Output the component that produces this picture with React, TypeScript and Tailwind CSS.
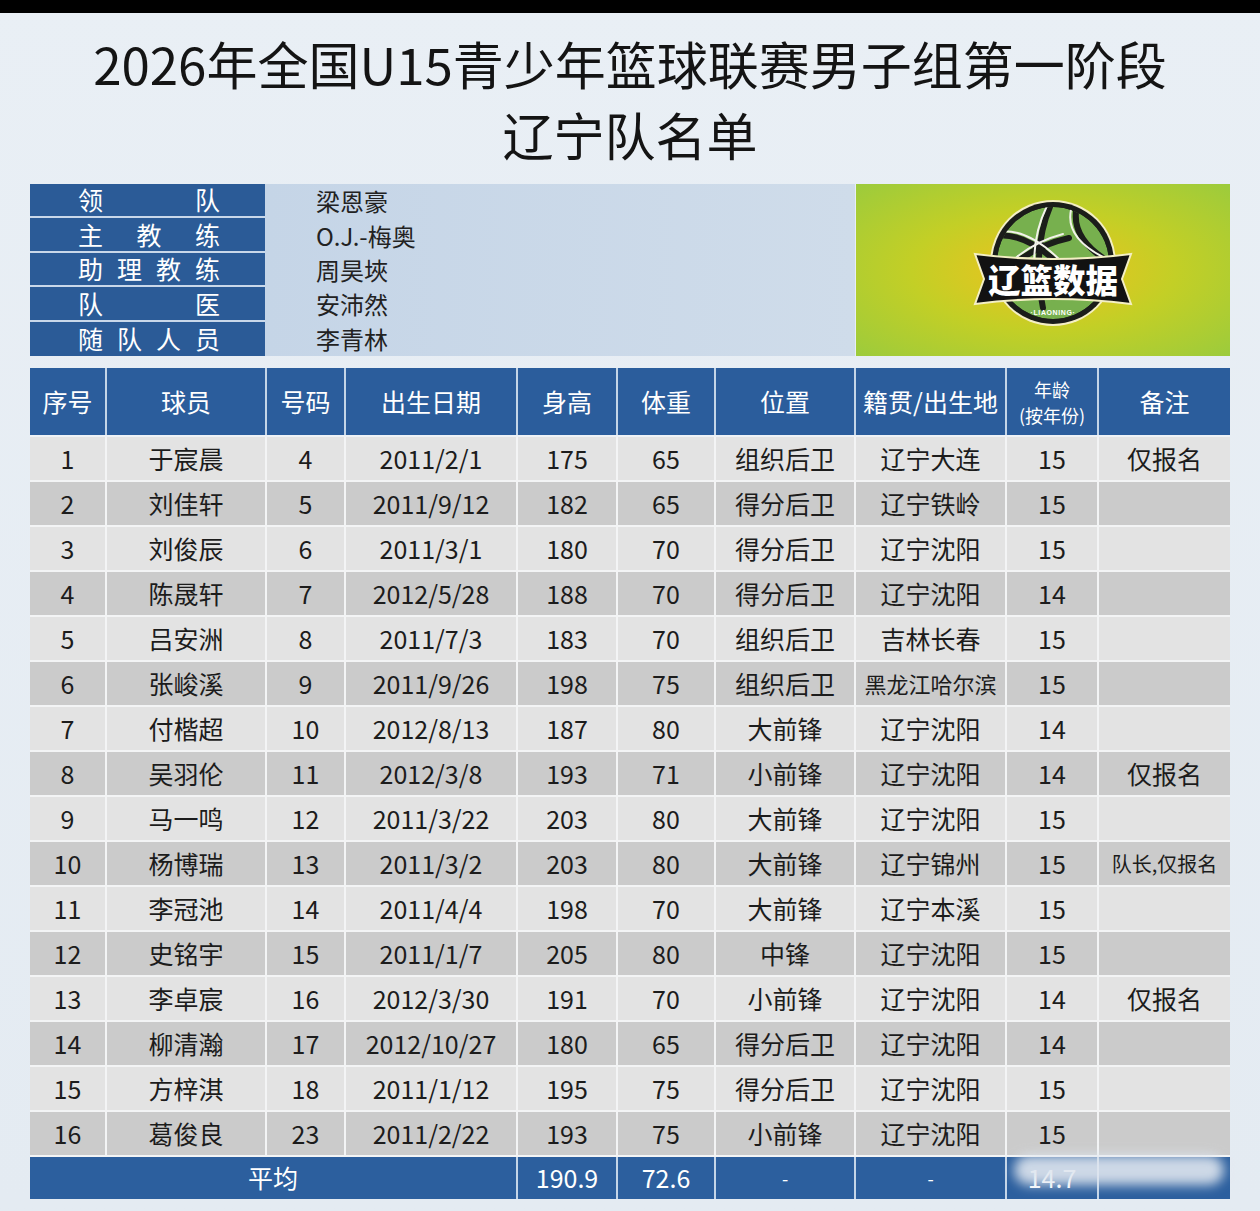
const staff = [
  { label: ["领", "队"], name: "梁恩豪" },
  { label: ["主", "教", "练"], name: "O.J.-梅奥" },
  { label: ["助", "理", "教", "练"], name: "周昊埉" },
  { label: ["队", "医"], name: "安沛然" },
  { label: ["随", "队", "人", "员"], name: "李青林" },
];

type Row = [number, string, number, string, number, number, string, string, number, string];

const players: Row[] = [
  [1, "于宸晨", 4, "2011/2/1", 175, 65, "组织后卫", "辽宁大连", 15, "仅报名"],
  [2, "刘佳轩", 5, "2011/9/12", 182, 65, "得分后卫", "辽宁铁岭", 15, ""],
  [3, "刘俊辰", 6, "2011/3/1", 180, 70, "得分后卫", "辽宁沈阳", 15, ""],
  [4, "陈晟轩", 7, "2012/5/28", 188, 70, "得分后卫", "辽宁沈阳", 14, ""],
  [5, "吕安洲", 8, "2011/7/3", 183, 70, "组织后卫", "吉林长春", 15, ""],
  [6, "张峻溪", 9, "2011/9/26", 198, 75, "组织后卫", "黑龙江哈尔滨", 15, ""],
  [7, "付楷超", 10, "2012/8/13", 187, 80, "大前锋", "辽宁沈阳", 14, ""],
  [8, "吴羽伦", 11, "2012/3/8", 193, 71, "小前锋", "辽宁沈阳", 14, "仅报名"],
  [9, "马一鸣", 12, "2011/3/22", 203, 80, "大前锋", "辽宁沈阳", 15, ""],
  [10, "杨博瑞", 13, "2011/3/2", 203, 80, "大前锋", "辽宁锦州", 15, "队长,仅报名"],
  [11, "李冠池", 14, "2011/4/4", 198, 70, "大前锋", "辽宁本溪", 15, ""],
  [12, "史铭宇", 15, "2011/1/7", 205, 80, "中锋", "辽宁沈阳", 15, ""],
  [13, "李卓宸", 16, "2012/3/30", 191, 70, "小前锋", "辽宁沈阳", 14, "仅报名"],
  [14, "柳清瀚", 17, "2012/10/27", 180, 65, "得分后卫", "辽宁沈阳", 14, ""],
  [15, "方梓淇", 18, "2011/1/12", 195, 75, "得分后卫", "辽宁沈阳", 15, ""],
  [16, "葛俊良", 23, "2011/2/22", 193, 75, "小前锋", "辽宁沈阳", 15, ""],
];

const cols = "grid grid-cols-[77px_160px_79px_172px_100px_98px_140px_151px_92px_131px]";

function Logo() {
  return (
    <svg width="160" height="132" viewBox="0 0 160 132">
      <defs>
        <clipPath id="ball">
          <circle cx="80" cy="65" r="56" />
        </clipPath>
      </defs>
      <circle cx="80" cy="65" r="63" fill="#f4efc4" />
      <circle cx="80" cy="65" r="61" fill="#1b1d1a" />
      <g clipPath="url(#ball)">
        <circle cx="80" cy="65" r="56" fill="#77b04e" />
        {/* seams */}
        <g stroke="#1b1d1a" strokeWidth="6" fill="none" strokeLinecap="round">
          <path d="M18 38 Q62 30 112 96" />
          <path d="M80 2 Q58 48 70 110" />
          <path d="M104 8 Q96 42 140 66" />
          <path d="M22 84 Q52 50 96 40" />
        </g>
        <g stroke="#f2f2ea" strokeWidth="2" fill="none" strokeLinecap="round">
          <path d="M24 34 Q62 27 108 86" />
          <path d="M74 8 Q55 46 64 96" />
          <path d="M98 12 Q92 40 132 60" />
          <path d="M26 76 Q52 46 90 36" />
        </g>
      </g>
      {/* banner */}
      <path
        d="M2 56 Q80 66 158 56 L149 81 L158 106 Q80 96 2 106 L11 81 Z"
        fill="#121212"
        stroke="#f4efc4"
        strokeWidth="2"
      />
      <text
        x="80"
        y="95"
        textAnchor="middle"
        fill="#ffffff"
        fontSize="33"
        fontWeight="900"
        fontFamily="'Noto Sans CJK SC', sans-serif"
        textLength="130"
        lengthAdjust="spacingAndGlyphs"
      >
        辽篮数据
      </text>
      <text
        x="80"
        y="117"
        textAnchor="middle"
        fill="#ffffff"
        fontSize="7"
        fontWeight="700"
        fontFamily="'Liberation Sans', sans-serif"
        letterSpacing="0.6"
      >
        ·LIAONING·
      </text>
    </svg>
  );
}

export default function App() {
  return (
    <div className="w-[1260px] min-h-[1211px] bg-gradient-to-b from-[#e9eff5] to-[#e4ebf2] font-['Noto_Sans_CJK_SC','Noto_Sans',sans-serif] text-[#1c1c1c]">
      <div className="h-[13px] bg-black" />

      {/* title */}
      <div className="pt-[15px] text-center text-[51px] leading-[71px] text-[#141414]">
        <div>2026年全国U15青少年篮球联赛男子组第一阶段</div>
        <div>辽宁队名单</div>
      </div>

      {/* staff */}
      <div className="mt-[14px] mx-[30px] flex h-[172px]">
        <div className="w-[235px] grid grid-rows-5 bg-[#2b5b97]">
          {staff.map((s, i) => (
            <div
              key={i}
              className={`flex items-center justify-between pl-[48px] pr-[45px] text-[25px] text-white ${
                i < 4 ? "border-b-2 border-[#c9d8ea]" : ""
              }`}
            >
              {s.label.map((c, j) => (
                <span key={j}>{c}</span>
              ))}
            </div>
          ))}
        </div>
        <div className="w-[590px] grid grid-rows-5 bg-gradient-to-r from-[#c5d5e7] to-[#cfdcea]">
          {staff.map((s, i) => (
            <div key={i} className="flex items-center pl-[51px] text-[24px] text-[#222]">
              {s.name}
            </div>
          ))}
        </div>
        <div className="ml-[1px] flex-1 flex items-center justify-center pl-[20px] pb-[12px] bg-[radial-gradient(ellipse_at_center,#efc21e_0%,#c3cf26_50%,#9ccb3c_100%)]">
          <Logo />
        </div>
      </div>

      {/* roster table */}
      <div className="mt-[12px] mx-[30px] relative">
        <div className={`${cols} h-[69px] bg-[#2b5d9c] border-b-2 border-[#eef2f6] text-white text-[25px]`}>
          {["序号", "球员", "号码", "出生日期", "身高", "体重", "位置", "籍贯/出生地"].map((h) => (
            <div
              key={h}
              className="flex items-center justify-center border-r-2 border-[#c4d5e8] whitespace-nowrap"
            >
              {h}
            </div>
          ))}
          <div className="flex flex-col items-center justify-center border-r-2 border-[#c4d5e8] text-[18px] leading-[26px]">
            <span>年龄</span>
            <span>(按年份)</span>
          </div>
          <div className="flex items-center justify-center">备注</div>
        </div>

        {players.map((p, i) => (
          <div
            key={p[0]}
            className={`${cols} h-[45px] border-b-2 border-[#f3f4f5] text-[25px] ${
              i % 2 === 0 ? "bg-[#e3e3e3]" : "bg-[#cbcbcb]"
            }`}
          >
            {p.map((v, j) => (
              <div
                key={j}
                className={`flex items-center justify-center whitespace-nowrap ${
                  j < 9 ? "border-r-2 border-[#f3f4f5]" : ""
                } ${j === 7 && String(v).length > 4 ? "text-[22px]" : ""} ${
                  j === 9 && String(v).length > 3 ? "text-[20px]" : ""
                }`}
              >
                {v}
              </div>
            ))}
          </div>
        ))}

        <div className={`${cols} h-[42px] bg-[#2c5f9e] text-white text-[25px]`}>
          <div className="col-span-4 flex items-center justify-center border-r-2 border-[#c4d5e8]">平均</div>
          <div className="flex items-center justify-center border-r-2 border-[#c4d5e8]">190.9</div>
          <div className="flex items-center justify-center border-r-2 border-[#c4d5e8]">72.6</div>
          <div className="flex items-center justify-center border-r-2 border-[#c4d5e8] text-[18px]">-</div>
          <div className="flex items-center justify-center border-r-2 border-[#c4d5e8] text-[18px]">-</div>
          <div className="flex items-center justify-center border-r-2 border-[#c4d5e8]">14.7</div>
          <div />
        </div>

        {/* blurred watermark over the footer */}
        <div className="absolute right-[6px] bottom-[14px] w-[210px] h-[30px] rounded-full bg-[#dfe6ef] opacity-90 blur-[6px]" />
      </div>
    </div>
  );
}
